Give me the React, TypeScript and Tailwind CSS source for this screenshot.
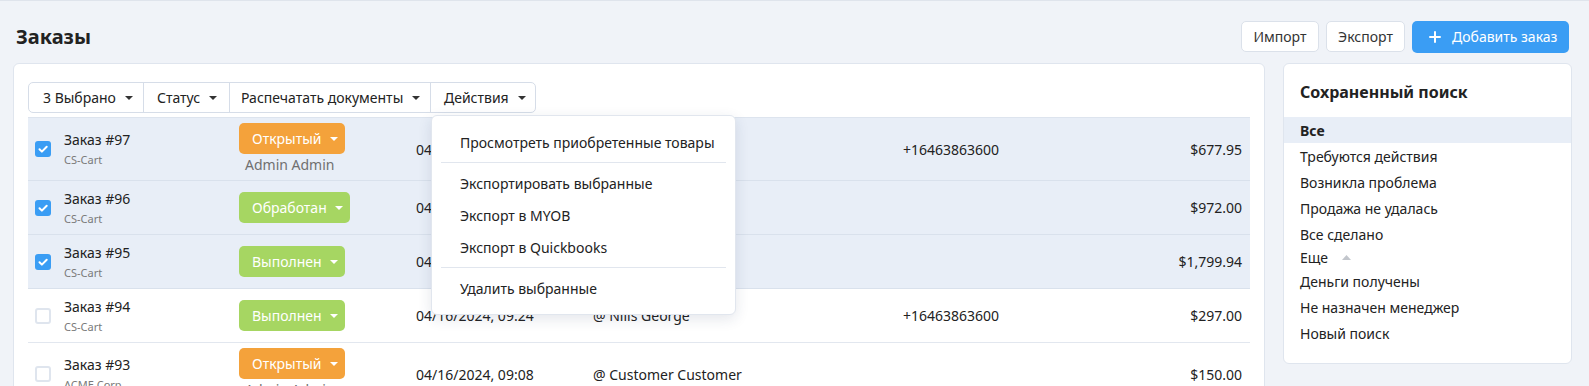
import React from 'react';

type Status = 'open' | 'processed' | 'done';

interface Order {
  id: number;
  source: string;
  status: Status;
  manager?: string;
  date: string;
  customer: string;
  phone: string;
  total: string;
  checked: boolean;
}

const orders: Order[] = [
  { id: 97, source: 'CS-Cart', status: 'open', manager: 'Admin Admin', date: '04/16/2024, 10:12', customer: '', phone: '+16463863600', total: '$677.95', checked: true },
  { id: 96, source: 'CS-Cart', status: 'processed', date: '04/16/2024, 09:51', customer: '', phone: '', total: '$972.00', checked: true },
  { id: 95, source: 'CS-Cart', status: 'done', date: '04/16/2024, 09:40', customer: '', phone: '', total: '$1,799.94', checked: true },
  { id: 94, source: 'CS-Cart', status: 'done', date: '04/16/2024, 09:24', customer: '@ Nills George', phone: '+16463863600', total: '$297.00', checked: false },
  { id: 93, source: 'ACME Corp', status: 'open', manager: 'Admin Admin', date: '04/16/2024, 09:08', customer: '@ Customer Customer', phone: '', total: '$150.00', checked: false },
  { id: 92, source: 'CS-Cart', status: 'done', date: '04/15/2024, 18:30', customer: '@ Customer Customer', phone: '', total: '$89.00', checked: false },
];

const statusLabel: Record<Status, string> = {
  open: 'Открытый',
  processed: 'Обработан',
  done: 'Выполнен',
};

const savedSearches = [
  'Требуются действия',
  'Возникла проблема',
  'Продажа не удалась',
  'Все сделано',
];

const moreSearches = ['Деньги получены', 'Не назначен менеджер', 'Новый поиск'];

const Caret = ({ className }: { className?: string }) => (
  <svg width="8" height="4" viewBox="0 0 8 4" className={className} fill="currentColor">
    <polygon points="0,0 8,0 4,4" />
  </svg>
);

const Checkbox = ({ checked }: { checked: boolean }) =>
  checked ? (
    <span className="flex h-4 w-4 items-center justify-center rounded-[3px] bg-[#3a9df4]">
      <svg width="12" height="12" viewBox="0 0 12 12" fill="none" stroke="white" strokeWidth={2} strokeLinecap="round" strokeLinejoin="round">
        <path d="M2.5 6.2l2.4 2.4 4.8-4.9" />
      </svg>
    </span>
  ) : (
    <span className="block h-4 w-4 rounded-[3px] border-2 border-[#dfe5ee] bg-white" />
  );

const StatusBadge = ({ status }: { status: Status }) => (
  <div
    className={`flex h-[31px] items-center rounded-[5px] pl-[13px] pr-[7px] text-[14px] text-white ${
      status === 'open' ? 'bg-[#f4a23b]' : 'bg-[#a6d662]'
    }`}
  >
    <span>{statusLabel[status]}</span>
    <Caret className="ml-[8px] text-white" />
  </div>
);

const OrderRow = ({ order }: { order: Order }) => (
  <div
    className={`grid grid-cols-[36px_175px_177px_177px_310px_1fr_120px] items-center border-b ${
      order.checked ? 'bg-[#e8eef7] border-[#d9e1ec]' : 'bg-white border-[#e2e7ef]'
    } ${order.manager ? 'h-[63px]' : 'h-[54px]'}`}
  >
    <div className="pl-[7px]">
      <Checkbox checked={order.checked} />
    </div>
    <div>
      <div className="text-[14px] leading-[20px] text-[#222]">Заказ #{order.id}</div>
      <div className="mt-[2px] text-[11px] leading-[16px] text-[#7a7a7a]">{order.source}</div>
    </div>
    <div className="flex flex-col items-start">
      <StatusBadge status={order.status} />
      {order.manager && (
        <div className="pl-[6px] text-[14px] leading-[21px] text-[#707070]">{order.manager}</div>
      )}
    </div>
    <div className="text-[14px] text-[#222]">{order.date}</div>
    <div className="text-[14px] text-[#222]">{order.customer}</div>
    <div className="text-[14px] text-[#222]">{order.phone}</div>
    <div className="pr-2 text-right text-[14px] text-[#222]">{order.total}</div>
  </div>
);

const ActionsMenu = () => (
  <div className="absolute left-0 top-[calc(100%+3px)] z-20 w-[305px] rounded-md border border-[#e1e6ee] bg-white py-[10px] shadow-[0_4px_14px_rgba(30,50,90,0.12)]">
    <div className="flex h-8 items-center pl-[28px] text-[14px] text-[#222]">Просмотреть приобретенные товары</div>
    <div className="mx-[9px] my-1 h-px bg-[#e1e6ee]" />
    <div className="flex h-8 items-center pl-[28px] text-[14px] text-[#222]">Экспортировать выбранные</div>
    <div className="flex h-8 items-center pl-[28px] text-[14px] text-[#222]">Экспорт в MYOB</div>
    <div className="flex h-8 items-center pl-[28px] text-[14px] text-[#222]">Экспорт в Quickbooks</div>
    <div className="mx-[9px] my-1 h-px bg-[#e1e6ee]" />
    <div className="flex h-8 items-center pl-[28px] text-[14px] text-[#222]">Удалить выбранные</div>
  </div>
);

const App = () => {
  return (
    <div className="h-screen overflow-hidden border-t border-[#dfe4ec] bg-[#f0f3f8] pl-[13px] pr-[17px] pt-[20px] font-['Noto_Sans',sans-serif] text-[#222]">
      {/* Header */}
      <div className="flex h-[31px] items-center justify-between pl-[3px] pr-[3px]">
        <h1 className="text-[20px] font-bold text-[#222]">Заказы</h1>
        <div className="flex gap-[7px]">
          <button className="h-[31px] w-[78px] rounded-[5px] border border-[#dbe1ea] bg-white text-[14px] text-[#333]">Импорт</button>
          <button className="h-[31px] w-[79px] rounded-[5px] border border-[#dbe1ea] bg-white text-[14px] text-[#333]">Экспорт</button>
          <button className="flex h-[32px] w-[157px] items-center rounded-[5px] bg-[#3a9df4] pl-[17px] text-[14px] text-white">
            <svg width="12" height="12" viewBox="0 0 12 12" stroke="white" strokeWidth={2} strokeLinecap="round">
              <path d="M6 1v10M1 6h10" />
            </svg>
            <span className="ml-[11px]">Добавить заказ</span>
          </button>
        </div>
      </div>

      <div className="mt-[11px] grid grid-cols-[1fr_289px] items-start gap-[18px]">
        {/* Orders card */}
        <div className="rounded-md border border-[#dfe5ee] bg-white px-[14px] pb-4 pt-[18px]">
          <div className="flex h-[31px] w-max rounded-[5px] border border-[#d6dde8] bg-white text-[14px] text-[#222]">
            <div className="flex w-[114px] items-center pl-[14px]">
              3 Выбрано
              <Caret className="ml-[9px] text-[#333]" />
            </div>
            <div className="flex w-[86px] items-center border-l border-[#d6dde8] pl-[13px]">
              Статус
              <Caret className="ml-[9px] text-[#333]" />
            </div>
            <div className="flex w-[201px] items-center border-l border-[#d6dde8] pl-[11px]">
              Распечатать документы
              <Caret className="ml-[9px] text-[#333]" />
            </div>
            <div className="relative flex w-[105px] items-center border-l border-[#d6dde8] pl-[13px]">
              Действия
              <Caret className="ml-[9px] text-[#333]" />
              <ActionsMenu />
            </div>
          </div>

          <div className="mt-1 border-t border-[#dde4ee]">
            {orders.map((o) => (
              <OrderRow key={o.id} order={o} />
            ))}
          </div>
        </div>

        {/* Saved search card */}
        <div className="rounded-md border border-[#dfe5ee] bg-white pb-[17px]">
          <div className="px-4 pb-[13px] pt-[16px]">
            <h2 className="text-[16px] font-bold leading-[24px] text-[#222]">Сохраненный поиск</h2>
          </div>
          <div className="flex h-[26px] items-center bg-[#e8eef7] px-4 text-[14px] font-bold">Все</div>
          {savedSearches.map((s) => (
            <div key={s} className="flex h-[26px] items-center px-4 text-[14px]">{s}</div>
          ))}
          <div className="flex h-[21px] items-center px-4 text-[14px]">
            Еще
            <svg width="9" height="5" viewBox="0 0 9 5" className="ml-[14px] text-[#c2c6cc]" fill="currentColor">
              <polygon points="0,5 9,5 4.5,0" />
            </svg>
          </div>
          {moreSearches.map((s) => (
            <div key={s} className="flex h-[26px] items-center px-4 text-[14px]">{s}</div>
          ))}
        </div>
      </div>
    </div>
  );
};

export default App;
